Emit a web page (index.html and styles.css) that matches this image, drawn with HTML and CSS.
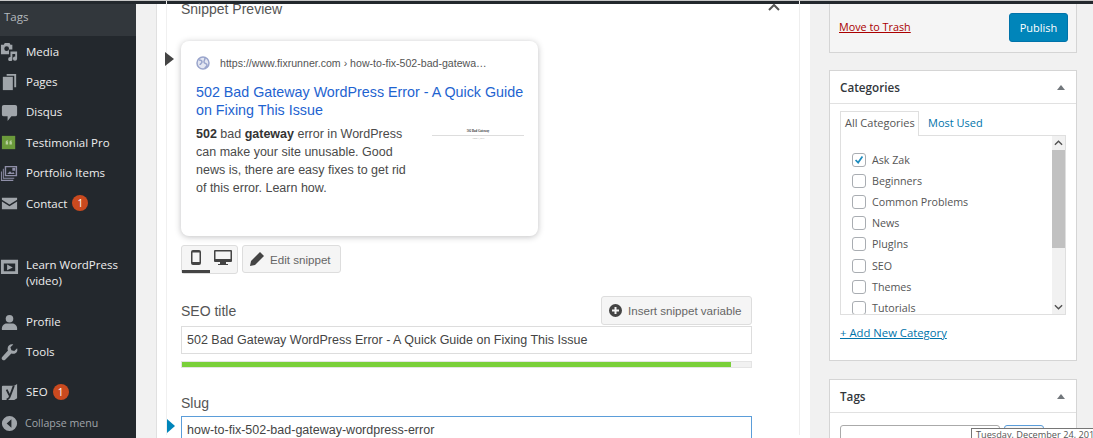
FILE: index.html
```html
<!DOCTYPE html>
<html lang="en">
<head>
    <meta charset="UTF-8">
    <title>Edit Post</title>
    <link rel="stylesheet" href="styles.css">
</head>
<body>
<div class="page">
    <div class="topbar"></div>
    <div class="layout">
        <nav class="sidebar">
            <div class="submenu-item">Tags</div>
            <a class="menu-item">
                <svg class="menu-icon" viewBox="0 0 20 20"><path fill-rule="evenodd" d="M1 3h3l1-2h5l1 2h2v5H9.500v5H1zM7 4.500a2.500 2.500 0 1 0 0 5 2.500 2.500 0 0 0 0-5z"/><path d="M11 10h7v7.500a2.200 2.200 0 1 1-2-2.100V12.500h-3v5.500a2.200 2.200 0 1 1-2-2.100z"/></svg>
                Media
            </a>
            <a class="menu-item">
                <svg class="menu-icon" viewBox="0 0 20 20"><path d="M7 1h10v14h-2V3H7z"/><path d="M3 4h10.500v14H3z"/></svg>
                Pages
            </a>
            <a class="menu-item">
                <svg class="menu-icon" viewBox="0 0 20 20"><path d="M4 2h12a2 2 0 0 1 2 2v8a2 2 0 0 1-2 2h-4l-4 5v-5H4a2 2 0 0 1-2-2V4a2 2 0 0 1 2-2z"/></svg>
                Disqus
            </a>
            <a class="menu-item">
                <svg class="menu-icon" viewBox="0 0 20 20"><rect class="icon-green" x="2" y="3" width="14" height="14"/><path class="icon-quote" d="M6 9h2.500v3H6zM10 9h2.500v3H10zM6 9l1.500-1.500h1L7.500 9zM10 9l1.500-1.500h1L11.500 9z"/></svg>
                Testimonial Pro
            </a>
            <a class="menu-item">
                <svg class="menu-icon icon-purple" viewBox="0 0 20 20"><path fill-rule="evenodd" d="M5 2h13v11H5zM6.500 3.500v8h10v-8z"/><path d="M7.500 10.500l3-3 2 2 1.500-1 1.500 2zM13 4h3v3h-3z"/><path d="M3 5h1v9.500h11v1H3z"/><path d="M1 8h1v8.500h12V18H1z"/></svg>
                Portfolio Items
            </a>
            <a class="menu-item">
                <svg class="menu-icon" viewBox="0 0 20 20"><path d="M2 4h16v2l-8 5-8-5z"/><path d="M2 8l8 5 8-5v8H2z"/></svg>
                Contact <span class="count">1</span>
            </a>
            <a class="menu-item menu-item-tall">
                <svg class="menu-icon" viewBox="0 0 20 20"><path fill-rule="evenodd" d="M1 4h18v15H1zM4 8v8h12V8z"/><path d="M7.500 9l6 3-6 3z"/></svg>
                <span>Learn WordPress<br>(video)</span>
            </a>
            <a class="menu-item menu-item-profile">
                <svg class="menu-icon" viewBox="0 0 20 20"><circle cx="10" cy="6" r="4"/><path d="M2 18v-2c0-3 3-5 5-5h6c2 0 5 2 5 5v2z"/></svg>
                Profile
            </a>
            <a class="menu-item">
                <svg class="menu-icon" viewBox="0 0 20 20"><path d="M18 5.500l-3 3-3-1-1-3 3-3c-3-.8-6 1-6 4.500 0 .8.100 1.300.400 2L2.500 14.500c-1 1-1 2 0 3s2 1 3 0L12 11c.7.300 1.300.400 2 .400 3.500 0 5-3 4-5.900z"/></svg>
                Tools
            </a>
            <a class="menu-item menu-item-seo">
                <svg class="menu-icon" viewBox="0 0 20 20"><path d="M3 3h12l3 -2v15l-3 2H3a1 1 0 0 1-1-1V4a1 1 0 0 1 1-1z"/><path class="icon-cut" d="M7 7l3 6M14.500 3l-4.500 12c-.5 1.200-1.300 2-3 2.500"/></svg>
                SEO <span class="count">1</span>
            </a>
            <a class="collapse-item">
                <svg class="menu-icon" viewBox="0 0 20 20"><path fill-rule="evenodd" d="M10 2a8 8 0 1 1 0 16 8 8 0 0 1 0-16zM12 5.500L7 10l5 4.500z"/></svg>
                Collapse menu
            </a>
        </nav>

        <main class="editor">
            <div class="editor-inner">
                <div class="snippet-head">
                    <span class="snippet-heading">Snippet Preview</span>
                    <svg class="collapse-chevron" viewBox="0 0 12 8"><path d="M1 7l5-5 5 5"/></svg>
                </div>

                <span class="marker marker-dark"></span>
                <div class="serp-card">
                    <div class="serp-url">
                        <svg class="globe" viewBox="0 0 14 14"><circle cx="7" cy="7" r="6"/><path d="M3 4c2 0 3 1 3 2S4 8 4 9M9 2c0 2-1 2-1 4s3 1 3 3-2 2-2 3"/></svg>
                        https://www.fixrunner.com › how-to-fix-502-bad-gatewa…
                    </div>
                    <div class="serp-title">502 Bad Gateway WordPress Error - A Quick Guide on Fixing This Issue</div>
                    <div class="serp-body">
                        <p class="serp-desc"><b>502</b> bad <b>gateway</b> error in WordPress can make your site unusable. Good news is, there are easy fixes to get rid of this error. Learn how.</p>
                        <div class="serp-thumb">
                            <span class="thumb-title">502 Bad Gateway</span>
                            <span class="thumb-date">August 1, 2019</span>
                        </div>
                    </div>
                </div>

                <div class="snippet-tools">
                    <div class="device-toggle">
                        <span class="device-tab device-tab-active">
                            <svg class="device-icon" width="10" height="15" viewBox="0 0 10 15"><path fill-rule="evenodd" d="M2 0h6a2 2 0 0 1 2 2v11a2 2 0 0 1-2 2H2a2 2 0 0 1-2-2V2a2 2 0 0 1 2-2zM1.500 2.500v9.500h7V2.500z"/></svg>
                        </span>
                        <span class="device-tab">
                            <svg class="device-icon" width="18" height="16" viewBox="0 0 18 16"><path fill-rule="evenodd" d="M1 0h16a1 1 0 0 1 1 1v10a1 1 0 0 1-1 1h-5v2h2v1H4v-1h2v-2H1a1 1 0 0 1-1-1V1a1 1 0 0 1 1-1zM1.500 1.500V9h15V1.500z"/></svg>
                        </span>
                    </div>
                    <button class="tool-btn edit-btn">
                        <svg class="device-icon" width="14" height="14" viewBox="0 0 14 14"><path d="M10 0l4 4-9 9-5 1 1-5z"/></svg>
                        Edit snippet
                    </button>
                </div>

                <div class="field-head">
                    <label class="field-label">SEO title</label>
                    <button class="tool-btn insert-btn">
                        <svg class="device-icon" width="13" height="13" viewBox="0 0 13 13"><path fill-rule="evenodd" d="M6.500 0a6.500 6.500 0 1 1 0 13 6.500 6.500 0 0 1 0-13zM5.500 3v2.500H3v2h2.500V10h2V7.500H10v-2H7.500V3z"/></svg>
                        Insert snippet variable
                    </button>
                </div>
                <div class="text-field">502 Bad Gateway WordPress Error - A Quick Guide on Fixing This Issue</div>
                <div class="progress"><div class="progress-fill"></div></div>

                <label class="field-label slug-label">Slug</label>
                <span class="marker marker-blue"></span>
                <div class="text-field text-field-focus">how-to-fix-502-bad-gateway-wordpress-error</div>
            </div>
        </main>

        <aside class="side-col">
            <section class="postbox publish-box">
                <a class="trash-link">Move to Trash</a>
                <button class="publish-btn">Publish</button>
            </section>

            <section class="postbox categories-box">
                <header class="postbox-head">
                    <h2>Categories</h2>
                    <span class="toggle-arrow"></span>
                </header>
                <div class="postbox-body">
                    <div class="tabs">
                        <span class="tab tab-active">All Categories</span>
                        <span class="tab">Most Used</span>
                    </div>
                    <div class="category-panel">
                        <ul class="category-list">
                            <li><span class="checkbox checkbox-on"><svg viewBox="0 0 14 14"><path d="M3 7l3 3 5-7"/></svg></span>Ask Zak</li>
                            <li><span class="checkbox"></span>Beginners</li>
                            <li><span class="checkbox"></span>Common Problems</li>
                            <li><span class="checkbox"></span>News</li>
                            <li><span class="checkbox"></span>PlugIns</li>
                            <li><span class="checkbox"></span>SEO</li>
                            <li><span class="checkbox"></span>Themes</li>
                            <li><span class="checkbox"></span>Tutorials</li>
                        </ul>
                        <div class="scrollbar">
                            <svg class="scroll-arrow" viewBox="0 0 10 6"><path d="M1 5l4-4 4 4"/></svg>
                            <div class="scroll-thumb"></div>
                            <svg class="scroll-arrow scroll-arrow-down" viewBox="0 0 10 6"><path d="M1 1l4 4 4-4"/></svg>
                        </div>
                    </div>
                    <a class="add-category">+ Add New Category</a>
                </div>
            </section>

            <section class="postbox tags-box">
                <header class="postbox-head">
                    <h2>Tags</h2>
                    <span class="toggle-arrow"></span>
                </header>
                <div class="postbox-body tags-body">
                    <div class="tag-input"></div>
                    <div class="tag-add"></div>
                </div>
            </section>
        </aside>
    </div>
    <div class="tooltip">Tuesday, December 24, 2019</div>
</div>
</body>
</html>
```

FILE: styles.css
```css
* {
    box-sizing: border-box;
}
html, body {
    margin: 0;
    padding: 0;
}
.page {
    position: relative;
    width: 1093px;
    height: 438px;
    overflow: hidden;
    background: #f1f1f1;
    font-family: "Open Sans", sans-serif;
}
.topbar {
    height: 4px;
    background: #23282d;
    border-top: 1px solid #c8c8c8;
}
.layout {
    display: flex;
    height: 434px;
}

/* admin menu */
.sidebar {
    flex: none;
    width: 136px;
    background: #23282d;
    color: #eee;
    font-size: 11.500px;
}
.submenu-item {
    height: 32px;
    padding: 5px 0 0 4px;
    background: #32373c;
    color: #b4b9be;
}
.menu-item {
    display: flex;
    align-items: center;
    height: 30.4px;
    padding-left: 26px;
    position: relative;
}
.menu-icon {
    position: absolute;
    left: 0;
    top: 50%;
    width: 19px;
    height: 19px;
    margin-top: -9px;
    fill: #a0a5aa;
}
.icon-green {
    fill: #6b9a3b;
}
.icon-quote {
    fill: #b7cf9c;
}
.icon-purple {
    fill: #8f8fa8;
}
.icon-cut {
    fill: none;
    stroke: #23282d;
    stroke-width: 2;
}
.count {
    display: inline-flex;
    align-items: center;
    justify-content: center;
    width: 16px;
    height: 16px;
    margin-left: 5px;
    border-radius: 50%;
    background: #ca4a1f;
    color: #fff;
    font-size: 10px;
}
.menu-item-tall {
    height: 31px;
    margin-top: 39px;
    line-height: 15.500px;
}
.menu-item-tall .menu-icon {
    top: 0;
    margin-top: -1px;
}
.menu-item-profile {
    margin-top: 18px;
}
.menu-item-seo {
    margin-top: 9.500px;
}
.collapse-item {
    display: flex;
    align-items: center;
    position: relative;
    height: 30px;
    margin-top: 1px;
    padding-left: 25px;
    color: #a0a5aa;
    font-size: 10.600px;
}

/* main editor column */
.editor {
    flex: none;
    width: 654px;
    margin-left: 20px;
    padding-left: 9px;
    background: #fff;
    border-left: 1px solid #e0e0e0;
}
.editor-inner {
    position: relative;
    height: 100%;
    padding: 0 47px 0 14px;
    border-left: 1px solid #f0f0f0;
    border-right: 1px solid #eeeeee;
    width: 634px;
    font-family: "Liberation Sans", Arial, sans-serif;
    color: #444;
}
.snippet-head {
    display: flex;
    justify-content: space-between;
    align-items: center;
    height: 16px;
    margin: -3px -28px 0 0;
}
.snippet-heading {
    font-size: 14px;
    color: #555;
}
.collapse-chevron {
    width: 12px;
    height: 8px;
    margin-bottom: 4px;
    fill: none;
    stroke: #555;
    stroke-width: 2;
}
.marker {
    position: absolute;
    width: 0;
    height: 0;
    border-style: solid;
    border-color: transparent;
}
.marker-dark {
    left: -2px;
    top: 51px;
    border-width: 7px 0 7px 9px;
    border-left-color: #444;
}
.marker-blue {
    left: 0;
    top: 418px;
    border-width: 7px 0 7px 8px;
    border-left-color: #0085ba;
}

.serp-card {
    height: 195px;
    margin-top: 24px;
    width: 357px;
    padding: 13px 10px 0 15px;
    background: #fff;
    border-radius: 8px;
    box-shadow: 0 1px 6px rgba(32, 33, 36, 0.28);
}
.serp-url {
    display: flex;
    align-items: center;
    height: 18px;
    font-size: 10.600px;
    color: #545454;
}
.globe {
    width: 14px;
    height: 14px;
    margin-right: 10px;
    fill: #e4e7f2;
    stroke: #9aa5cc;
    stroke-width: 1.500;
}
.serp-title {
    margin-top: 11px;
    font-size: 14.300px;
    line-height: 18px;
    color: #1e63d0;
}
.serp-body {
    display: flex;
    justify-content: space-between;
    margin-top: 6px;
}
.serp-desc {
    width: 212px;
    margin: 0;
    font-size: 12.500px;
    line-height: 18px;
    color: #4a4a4a;
}
.serp-desc b {
    color: #333;
}
.serp-thumb {
    display: flex;
    flex-direction: column;
    align-items: center;
    width: 92px;
    margin-right: 4px;
    margin-top: -1px;
    padding-top: 5px;
    font-family: "Liberation Serif", serif;
}
.thumb-title {
    font-size: 3px;
    line-height: 4px;
    font-weight: bold;
    color: #333;
    width: 100%;
    text-align: center;
    padding-bottom: 2px;
    border-bottom: 1px solid #ddd;
}
.thumb-date {
    font-size: 2px;
    line-height: 4px;
    color: #999;
}

.snippet-tools {
    display: flex;
    gap: 4px;
    margin-top: 9px;
}
.device-toggle {
    display: flex;
    width: 57px;
    height: 29px;
    background: #f5f5f5;
    border: 1px solid #ddd;
    border-radius: 3px;
}
.device-tab {
    display: flex;
    justify-content: center;
    width: 28px;
    padding-top: 4px;
}
.device-tab-active {
    border-bottom: 3px solid #444;
}
.device-icon {
    fill: #444;
    flex: none;
}
.tool-btn {
    display: flex;
    align-items: center;
    background: #f5f5f5;
    border: 1px solid #ddd;
    border-radius: 3px;
    font-family: "Liberation Sans", Arial, sans-serif;
    font-size: 11.600px;
    color: #666;
    padding: 0;
}
.edit-btn {
    width: 99px;
    height: 28px;
    padding-left: 7px;
    gap: 6px;
}
.insert-btn {
    width: 151px;
    height: 29px;
    padding-left: 7px;
    gap: 6px;
}
.field-head {
    display: flex;
    justify-content: space-between;
    align-items: center;
    margin-top: 22px;
}
.field-label {
    display: block;
    font-size: 14px;
    color: #555;
}
.text-field {
    height: 28px;
    margin-top: 1px;
    padding: 6px 5px;
    background: #fff;
    border: 1px solid #ddd;
    font-size: 12.500px;
    line-height: 15px;
    color: #444;
}
.progress {
    height: 7px;
    margin-top: 7px;
    background: #f1f1f1;
    border: 1px solid #e4e4e4;
}
.progress-fill {
    width: 96.500%;
    height: 100%;
    background: #7ad03a;
}
.slug-label {
    margin-top: 27px;
    line-height: 16px;
}
.text-field-focus {
    margin-top: 5px;
    border-color: #5b9dd9;
}

/* right column */
.side-col {
    flex: none;
    width: 248px;
    margin-left: 19px;
}
.postbox {
    background: #fff;
    border: 1px solid #d5d5d5;
    font-size: 11px;
    color: #555;
}
.publish-box {
    display: flex;
    justify-content: space-between;
    align-items: center;
    height: 49px;
    padding: 0 8px 2px 9px;
    background: #f5f5f5;
    border-top: 0;
}
.trash-link {
    margin-bottom: 1px;
    font-size: 10.800px;
    color: #a00;
    text-decoration: underline;
}
.publish-btn {
    width: 59px;
    height: 29px;
    padding: 0;
    background: #0085ba;
    border: 1px solid #0073aa;
    border-radius: 3px;
    color: #fff;
    font-family: "Open Sans", sans-serif;
    font-size: 11px;
}
.categories-box {
    height: 291px;
    margin-top: 17px;
}
.postbox-head {
    display: flex;
    justify-content: space-between;
    align-items: center;
    height: 33px;
    padding: 0 11px 0 10px;
    border-bottom: 1px solid #e1e1e1;
}
.postbox-head h2 {
    margin: 0;
    font-size: 11.700px;
    font-weight: 600;
    color: #32373c;
}
.toggle-arrow {
    width: 0;
    height: 0;
    border-style: solid;
    border-width: 0 4px 5px 4px;
    border-color: transparent transparent #72777c transparent;
}
.postbox-body {
    padding: 7px 10px 0 10px;
}
.tabs {
    display: flex;
    height: 24px;
}
.tab {
    padding: 4px 9px 0 9px;
    color: #0073aa;
}
.tab-active {
    width: 79px;
    padding: 3px 0 0 4px;
    border: 1px solid #dfdfdf;
    border-bottom: 0;
    background: #fff;
    color: #555;
    position: relative;
    margin-bottom: -1px;
}
.category-panel {
    display: flex;
    justify-content: space-between;
    height: 180px;
    overflow: hidden;
    border: 1px solid #dfdfdf;
}
.category-list {
    list-style: none;
    margin: 0;
    padding: 13px 0 0 11px;
    font-size: 10.700px;
}
.category-list li {
    display: flex;
    align-items: center;
    gap: 6px;
    height: 21.200px;
}
.checkbox {
    display: block;
    flex: none;
    width: 14px;
    height: 14px;
    background: #fff;
    border: 1px solid #a9adb2;
    border-radius: 3px;
}
.checkbox svg {
    display: block;
    width: 12px;
    height: 12px;
    fill: none;
    stroke: #1e8cbe;
    stroke-width: 2;
}
.scrollbar {
    display: flex;
    flex-direction: column;
    width: 13px;
    background: #f1f1f1;
}
.scroll-arrow {
    flex: none;
    width: 9px;
    height: 6px;
    margin: 4px 2px 4px 2px;
    fill: none;
    stroke: #505050;
    stroke-width: 1.500;
}
.scroll-arrow-down {
    margin-top: auto;
}
.scroll-thumb {
    height: 98px;
    background: #c1c1c1;
}
.add-category {
    display: block;
    margin-top: 10px;
    font-size: 11.300px;
    color: #0073aa;
    text-decoration: underline;
}
.tags-box {
    height: 80px;
    margin-top: 18px;
}
.tags-body {
    display: flex;
    gap: 4px;
    padding-top: 12px;
}
.tag-input {
    width: 160px;
    height: 28px;
    background: #fff;
    border: 1px solid #aaa;
    border-radius: 3px;
}
.tag-add {
    width: 40px;
    height: 28px;
    background: #f7f7f7;
    border: 1px solid #5b9dd9;
    border-radius: 3px;
}
.tooltip {
    position: absolute;
    left: 971px;
    top: 428px;
    width: 140px;
    height: 20px;
    padding: 0 4px;
    background: #fff;
    border: 1px solid #767676;
    font-family: "Open Sans", sans-serif;
    font-size: 9.200px;
    line-height: 11px;
    color: #555;
    white-space: nowrap;
}
```
